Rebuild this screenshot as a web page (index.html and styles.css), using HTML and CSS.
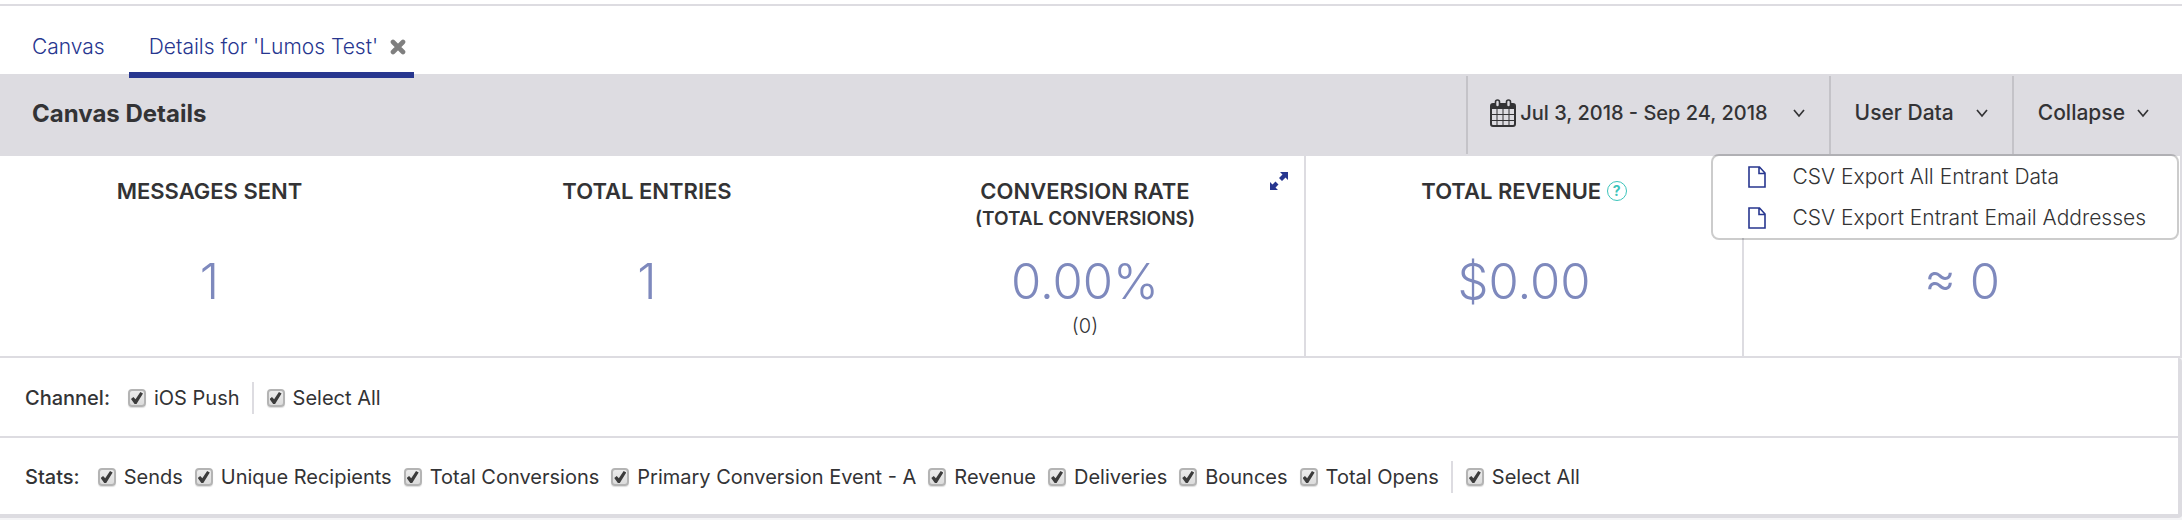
FILE: index.html
```html
<!DOCTYPE html>
<html lang="en">
<head>
<meta charset="utf-8">
<title>Canvas Details</title>
<link rel="stylesheet" href="styles.css">
</head>
<body>
<svg class="sprite" aria-hidden="true">
  <symbol id="chevron" viewBox="0 0 12 10"><path d="M1 2l5 6 5-6" fill="none" stroke="currentColor" stroke-width="1.7"/></symbol>
  <symbol id="file" viewBox="0 0 18 22"><path d="M1 1h10.500L17 7v14H1zM11 1v6.500h6" fill="none" stroke="currentColor" stroke-width="1.600"/></symbol>
</svg>
<nav class="tabs">
  <a class="tab" href="#canvas">Canvas</a>
  <div class="tab tab-active">
    <a href="#details">Details for 'Lumos Test'</a>
    <button class="close" type="button" aria-label="Close tab">
      <svg viewBox="0 0 16 16" width="16" height="16"><path d="M3 3l10 10M13 3L3 13" fill="none" stroke="currentColor" stroke-width="4.600" stroke-linecap="round"/></svg>
    </button>
  </div>
</nav>
<header class="header">
  <h1>Canvas Details</h1>
  <div class="actions">
    <button class="action action-date" type="button">
      <svg class="calendar" viewBox="0 0 26 28" width="26" height="28">
        <rect x="1" y="5" width="24" height="22" rx="2" fill="none" stroke="currentColor" stroke-width="2"/>
        <path d="M1 5h24v5H1z" fill="currentColor"/>
        <path d="M7 10v17M13 10v17M19 10v17M1 15.500h24M1 21.500h24" stroke="currentColor" stroke-width="1"/>
        <rect x="5.500" y="1" width="4" height="7" rx="2" fill="#dddce1" stroke="currentColor" stroke-width="1.600"/>
        <rect x="16.500" y="1" width="4" height="7" rx="2" fill="#dddce1" stroke="currentColor" stroke-width="1.600"/>
      </svg>
      <span>Jul 3, 2018 - Sep 24, 2018</span>
      <svg class="chevron" width="12" height="10"><use href="#chevron"/></svg>
    </button>
    <button class="action action-data" type="button" aria-expanded="true">
      <span>User Data</span>
      <svg class="chevron" width="12" height="10"><use href="#chevron"/></svg>
    </button>
    <button class="action action-collapse" type="button">
      <span>Collapse</span>
      <svg class="chevron" width="12" height="10"><use href="#chevron"/></svg>
    </button>
  </div>
  <ul class="menu">
    <li><a href="#export-all"><svg width="18" height="22"><use href="#file"/></svg>CSV Export All Entrant Data</a></li>
    <li><a href="#export-email"><svg width="18" height="22"><use href="#file"/></svg>CSV Export Entrant Email Addresses</a></li>
  </ul>
</header>
<main>
  <section class="metrics">
    <div class="metric metric-first">
      <h2>MESSAGES SENT</h2>
      <p class="value">1</p>
    </div>
    <div class="metric">
      <h2>TOTAL ENTRIES</h2>
      <p class="value">1</p>
    </div>
    <div class="metric">
      <button class="expand" type="button" aria-label="Expand">
        <svg viewBox="0 0 18 18" width="18" height="18"><path d="M10 0h8v8l-2.500-2.500-3.500 3.500-3-3 3.500-3.500zM0 10l2.500 2.500 3-3 3 3-3 3L8 18H0z" fill="currentColor"/></svg>
      </button>
      <h2>CONVERSION RATE <small>(TOTAL CONVERSIONS)</small></h2>
      <p class="value">0.00%</p>
      <p class="count">(0)</p>
    </div>
    <div class="metric metric-ruled">
      <h2>TOTAL REVENUE <button class="help" type="button" aria-label="Help">?</button></h2>
      <p class="value">$0.00</p>
    </div>
    <div class="metric metric-ruled">
      <h2></h2>
      <p class="value">≈ 0</p>
    </div>
  </section>
  <form class="filters">
    <fieldset class="filter">
      <span class="filter-name">Channel:</span>
      <label><input type="checkbox" checked>iOS Push</label>
      <label class="all"><input type="checkbox" checked>Select All</label>
    </fieldset>
    <fieldset class="filter">
      <span class="filter-name">Stats:</span>
      <label><input type="checkbox" checked>Sends</label>
      <label><input type="checkbox" checked>Unique Recipients</label>
      <label><input type="checkbox" checked>Total Conversions</label>
      <label><input type="checkbox" checked>Primary Conversion Event - A</label>
      <label><input type="checkbox" checked>Revenue</label>
      <label><input type="checkbox" checked>Deliveries</label>
      <label><input type="checkbox" checked>Bounces</label>
      <label><input type="checkbox" checked>Total Opens</label>
      <label class="all"><input type="checkbox" checked>Select All</label>
    </fieldset>
  </form>
</main>
</body>
</html>
```
FILE: styles.css
```css
* {
  box-sizing: border-box;
}

body {
  margin: 0;
  background: #f4f4f6;
  color: #333335;
  font: 400 20px/28px Inter, "Open Sans", sans-serif;
}

h1, h2, p, ul, fieldset {
  margin: 0;
  padding: 0;
  border: 0;
}

button {
  padding: 0;
  border: 0;
  background: none;
  color: inherit;
  font: inherit;
}

a {
  color: inherit;
  text-decoration: none;
}

svg {
  display: block;
  flex: none;
}

.sprite {
  position: absolute;
  width: 0;
  height: 0;
}

.tabs {
  display: flex;
  height: 74px;
  padding-top: 4px;
  background: #fff linear-gradient(#dddce1, #dddce1) 0 4px / 100% 2px no-repeat;
  color: #27368f;
  font-size: 21px;
  font-weight: 300;
}

.tab {
  display: flex;
  height: 74px;
  padding: 29px 24px 0 32px;
}

.tab-active {
  position: relative;
  z-index: 1;
  gap: 12px;
  padding: 29px 8px 0 20px;
  border-bottom: 6px solid #27368f;
}

.close {
  height: 28px;
  color: #7f7f7f;
}

.header {
  position: relative;
  display: flex;
  justify-content: space-between;
  height: 82px;
  background: #dddce1;
}

h1 {
  padding-left: 32px;
  font-size: 24px;
  font-weight: 700;
  line-height: 80px;
}

.actions {
  display: flex;
  padding: 2px 0;
}

.action {
  display: flex;
  align-items: center;
  padding: 0 24px 4px;
  border-left: 2px solid #c4c3c8;
  font-size: 21px;
  font-weight: 500;
}

.action-date {
  padding-left: 22px;
  gap: 4px;
  font-size: 20px;
}

.action-date .chevron {
  margin-left: 21px;
}

.action-data {
  gap: 22px;
}

.action-collapse {
  gap: 12px;
  padding-right: 33px;
}

.menu {
  position: absolute;
  z-index: 2;
  top: 80px;
  right: 3px;
  padding: 0 31px 0 35px;
  border: 2px solid rgba(0, 0, 0, .2);
  border-radius: 8px;
  background: #fff;
  background-clip: padding-box;
  font-size: 21px;
  font-weight: 300;
  list-style: none;
}

.menu a {
  display: flex;
  align-items: center;
  gap: 26px;
  height: 41px;
}

.menu svg {
  color: #27368f;
}

.metrics {
  display: grid;
  grid-template-columns: 428fr 438fr 438fr 438fr 438fr;
  height: 202px;
  border-right: 2px solid #dddce1;
  border-bottom: 2px solid #dddce1;
  background: #fff;
  text-align: center;
}

.metric {
  position: relative;
  padding-top: 21px;
}

.metric-first {
  padding-right: 9px;
}

.metric-ruled {
  border-left: 2px solid #dddce1;
}

h2 {
  height: 77px;
  font-size: 22px;
  font-weight: 600;
  line-height: 28px;
}

h2 small {
  display: block;
  font-size: 19px;
}

.value {
  color: #7e89bd;
  font-size: 49px;
  font-weight: 300;
  line-height: 56px;
}

.count {
  font-weight: 300;
  line-height: 32px;
}

.expand {
  position: absolute;
  top: 16px;
  right: 16px;
  color: #27368f;
}

.help {
  width: 20px;
  height: 20px;
  border: 1px solid #3cc4bb;
  border-radius: 50%;
  color: #3cc4bb;
  font-size: 14px;
  font-weight: 700;
  line-height: 18px;
  vertical-align: 3px;
}

.filters {
  border-right: 4px solid #dddce1;
  border-bottom: 4px solid #dddce1;
  border-radius: 0 4px 4px 0;
  background: #fff;
}

.filter {
  display: flex;
  align-items: center;
  gap: 12px;
  height: 76px;
  padding: 2px 0 0 25px;
}

.filter:first-child {
  height: 80px;
  border-bottom: 2px solid #dddce1;
}

.filter-name {
  padding-right: 6px;
  font-weight: 500;
}

.filter label {
  display: flex;
  align-items: center;
  gap: 8px;
}

.filter .all {
  height: 32px;
  padding-left: 13px;
  border-left: 2px solid #dddce1;
}

.filter input {
  appearance: none;
  position: relative;
  width: 18px;
  height: 18px;
  margin: 0;
  border: 2px solid #b4b4b4;
  border-radius: 4px;
  background: linear-gradient(#ececec, #dcdcdc);
  box-shadow: 0 1px 1px #ddd;
}

.filter input:checked::before {
  content: "";
  position: absolute;
  inset: 1px;
  background: #3c3c3c;
  clip-path: polygon(0 58%, 20% 42%, 38% 60%, 78% 0, 100% 12%, 46% 100%, 30% 100%);
}
```
